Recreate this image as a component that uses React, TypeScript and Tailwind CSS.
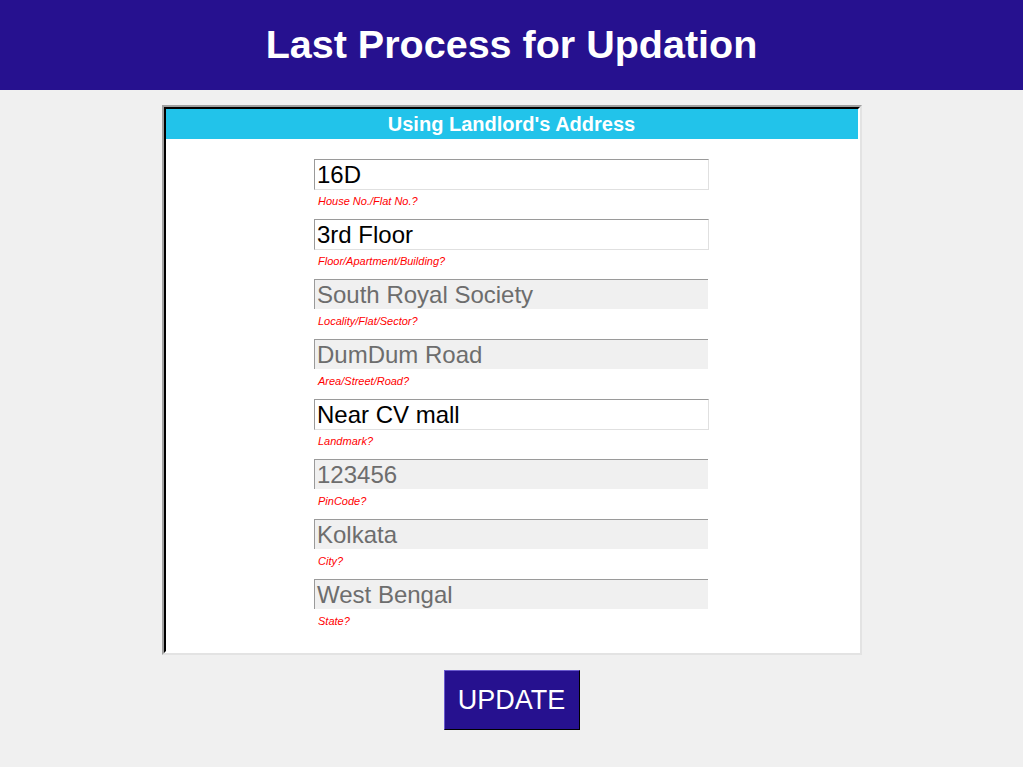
import React from "react";

type Field = { value: string; label: string; readOnly: boolean };

const fields: Field[] = [
  { value: "16D", label: "House No./Flat No.?", readOnly: false },
  { value: "3rd Floor", label: "Floor/Apartment/Building?", readOnly: false },
  { value: "South Royal Society", label: "Locality/Flat/Sector?", readOnly: true },
  { value: "DumDum Road", label: "Area/Street/Road?", readOnly: true },
  { value: "Near CV mall", label: "Landmark?", readOnly: false },
  { value: "123456", label: "PinCode?", readOnly: true },
  { value: "Kolkata", label: "City?", readOnly: true },
  { value: "West Bengal", label: "State?", readOnly: true },
];

export default function App() {
  return (
    <div
      className="min-h-[767px] bg-[#f0f0f0] flex flex-col items-center"
      style={{ fontFamily: '"Liberation Sans", Arial, sans-serif' }}
    >
      <div className="w-full h-[90px] bg-[#26118f] flex items-center justify-center">
        <h1 className="text-[39.5px] font-bold text-white leading-none">Last Process for Updation</h1>
      </div>

      <div className="mt-[15px] w-[700px] border-t-2 border-l-2 border-t-[#a0a0a0] border-l-[#a0a0a0] border-r-2 border-b-2 border-r-[#e3e3e3] border-b-[#e3e3e3]">
        <div className="border-t-2 border-l-2 border-t-black border-l-black border-r-2 border-b-2 border-r-white border-b-white bg-white">
          <div className="h-[30px] bg-[#22c3ea] flex items-center justify-center">
            <span className="text-[20px] font-bold text-white leading-none">Using Landlord's Address</span>
          </div>
          <div className="flex flex-col items-center pt-[20px] pb-[12px]">
            {fields.map((f) => (
              <div key={f.label} className="w-[395px] h-[60px] flex flex-col">
                <div
                  className={
                    f.readOnly
                      ? "h-[30px] w-[394px] box-border bg-[#f0f0f0] border-t border-l border-[#9a9a9a] text-[#6d6d6d] text-[24px] leading-[29px] pl-[2px]"
                      : "h-[31px] w-[395px] box-border bg-white border border-t-[#9a9a9a] border-l-[#9a9a9a] border-r-[#e0e0e0] border-b-[#e0e0e0] text-black text-[24px] leading-[29px] pl-[2px]"
                  }
                >
                  {f.value}
                </div>
                <div className={f.readOnly ? "pt-[4px] pl-[4px] leading-[14px]" : "pt-[3px] pl-[4px] leading-[14px]"}>
                  <span className="text-[11px] italic text-[#ff0000]">{f.label}</span>
                </div>
              </div>
            ))}
          </div>
        </div>
      </div>

      <button className="mt-[15px] w-[136px] h-[60px] bg-[#26118f] text-white text-[27px] border border-t-[#6a5acd] border-l-[#6a5acd] border-r-black border-b-black">
        UPDATE
      </button>
    </div>
  );
}
